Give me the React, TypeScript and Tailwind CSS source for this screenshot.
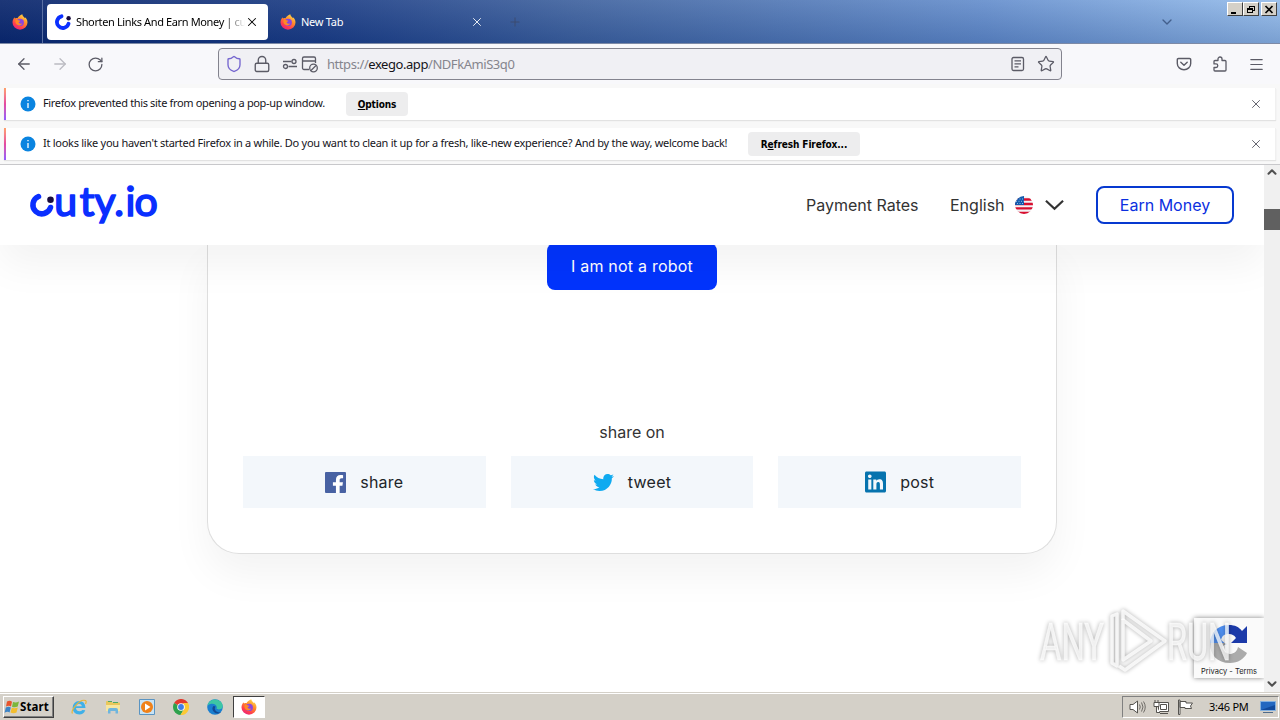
import type { ReactNode } from 'react';
import {
  ArrowLeft,
  ArrowRight,
  ChevronDown,
  ChevronUp,
  Lock,
  Menu,
  Plus,
  RotateCw,
  Shield,
  Star,
  X,
} from 'lucide-react';
import { FaFacebookF, FaLinkedin, FaTwitter } from 'react-icons/fa';

function FirefoxIcon({ className }: { className?: string }) {
  return (
    <svg viewBox="0 0 16 16" className={className}>
      <defs>
        <linearGradient id="fox" x1="0.8" y1="0" x2="0.2" y2="1">
          <stop offset="0" stopColor="#ffe14d" />
          <stop offset="0.4" stopColor="#ff8a2a" />
          <stop offset="0.75" stopColor="#ff3b4f" />
          <stop offset="1" stopColor="#e0208c" />
        </linearGradient>
      </defs>
      <path
        d="M10.3.3c.2 1.6 1 2.2 2.1 3.2.3.3.5.5.6.8.2-.2.2-.6.1-1 1.4 1 2.4 3 2.4 5.1a7.5 7.3 0 0 1-15 0c0-2.3 1-4 2.1-5.2 0 .7.2 1 .5 1.300.9-.5 1.600-.5 2.400-.3C6.200 2.900 8.100.8 10.300.3z"
        fill="url(#fox)"
      />
      <circle cx="8.2" cy="8.4" r="3.7" fill="#8a45e0" />
      <path d="M3.500 6.200c1.500-1 2.700-.4 3.400.2 1 .1 1.500.2 1.400.6-.5.700-1.600.6-1.700 1.300.2 1.500 2.300 1.800 3.600.9-.4 1.700-2.300 2.600-4 2-2.200-.8-3.200-2.800-2.700-5z" fill="#ff8b24" />
    </svg>
  );
}

function CutyMark({ className }: { className?: string }) {
  return (
    <svg viewBox="0 0 16 16" className={className}>
      <path d="M6.500 2.300A5.900 5.900 0 1 0 13.500 9.800" fill="none" stroke="#0a2fff" strokeWidth="3.8" strokeLinecap="round" />
      <circle cx="13.6" cy="4.2" r="2.2" fill="#190c3c" />
    </svg>
  );
}

function CaptionButton({ children }: { children: ReactNode }) {
  return (
    <button className="flex h-3.5 w-4 items-center justify-center border border-t-white border-r-[#404040] border-b-[#404040] border-l-white bg-[#d4d0c8]">
      <svg viewBox="0 0 10 9" className="h-[9px] w-2.5" fill="none" stroke="#000" shapeRendering="crispEdges">
        {children}
      </svg>
    </button>
  );
}

function TabStrip() {
  return (
    <div className="flex h-11 border-b border-[#7d8aa6] bg-[linear-gradient(to_bottom,#ffffff14,#00206030),linear-gradient(to_right,#0a266c,#1c3d85_25%,#40639f_45%,#668fcd_77%,#96bdeb)]">
      <div className="flex w-[43px] items-center justify-center border-r border-[#5a70a3]">
        <FirefoxIcon className="mr-0.5 size-4" />
      </div>
      <div className="mt-1 ml-1 flex h-9 w-[221px] items-center rounded bg-white pl-2">
        <CutyMark className="size-4" />
        <span className="mt-px ml-[5px] w-[169px] bg-[linear-gradient(to_right,#000_88%,#fff)] bg-clip-text text-[11px] tracking-[-0.37px] whitespace-nowrap text-transparent">
          Shorten Links And Earn Money | cu
        </span>
        <X className="size-3.5" strokeWidth={1.8} />
      </div>
      <div className="flex h-full w-[233px] items-center pl-3">
        <FirefoxIcon className="size-4" />
        <span className="mt-0.5 ml-[5px] flex-1 text-[11px] tracking-[-0.25px] text-white">New Tab</span>
        <X className="mr-[17px] size-3.5 text-white" strokeWidth={1.5} />
      </div>
      <div className="flex flex-1 items-center">
        <Plus className="ml-[7px] size-3.5 text-[#3b4a6b]" strokeWidth={1.5} />
        <ChevronDown className="mr-[52px] ml-auto size-4 text-[#435f8c]" strokeWidth={2} />
      </div>
      <div className="flex w-[53px] pt-0.5">
        <CaptionButton>
          <path d="M1 7.500h5" strokeWidth="2" />
        </CaptionButton>
        <CaptionButton>
          <path d="M3.500 3V1.500h5v4H7M3 1.500h6M1.500 3.500h5v4h-5zM1 4.500h6" />
        </CaptionButton>
        <div className="w-0.5" />
        <CaptionButton>
          <path d="M1.500 1l7 7M8.500 1l-7 7" strokeWidth="1.7" shapeRendering="auto" />
        </CaptionButton>
      </div>
    </div>
  );
}

function Toolbar() {
  return (
    <div className="flex h-10 items-center bg-[#f8f8fb] text-[#5b5b66]">
      <ArrowLeft className="ml-[15px] size-[18px]" strokeWidth={1.7} />
      <ArrowRight className="ml-[18px] size-[18px] text-[#bbbbc2]" strokeWidth={1.7} />
      <RotateCw className="ml-[18px] size-[17px]" strokeWidth={1.8} />
      <div className="ml-[114px] flex h-8 w-[844px] items-center rounded border border-[#83838e] bg-[#f0f0f4]">
        <Shield className="ml-[6px] size-[18px] text-[#7566cf]" strokeWidth={1.8} />
        <Lock className="ml-2.5 size-[18px]" strokeWidth={1.8} />
        <svg viewBox="0 0 16 16" className="ml-[11px] size-4" fill="none" stroke="currentColor" strokeWidth="1.3">
          <path d="M1 5.500h8.500M6.500 10.500H15" />
          <circle cx="12" cy="5.5" r="2" />
          <circle cx="3.5" cy="10.5" r="2" />
        </svg>
        <svg viewBox="0 0 18 18" className="ml-[3px] size-[18px]" fill="none" stroke="currentColor" strokeWidth="1.3">
          <path d="M8 14.500H3a1.500 1.500 0 0 1-1.500-1.500V3.500A1.500 1.500 0 0 1 3 2h10a1.500 1.500 0 0 1 1.500 1.500V8M1.500 6h13" />
          <circle cx="12.5" cy="13" r="3.8" />
          <path d="M10 15.500l5-5" />
        </svg>
        <span className="mt-0.5 ml-2 text-[13px] tracking-[-0.44px] whitespace-nowrap text-[#85858d]">
          https://<span className="text-[#15141a]">exego.app</span>/NDFkAmiS3q0
        </span>
        <svg viewBox="0 0 16 16" className="ml-auto size-4" fill="none" stroke="currentColor" strokeWidth="1.3">
          <rect x="2" y="1.5" width="11.5" height="13" rx="1.5" />
          <path d="M4.500 4.800h6.500M4.500 7.800h6.500M4.500 10.800h4" />
        </svg>
        <Star className="mr-[6px] ml-[11px] size-[18px]" strokeWidth={1.7} />
      </div>
      <svg viewBox="0 0 16 16" className="ml-[114px] size-4" fill="none" stroke="currentColor" strokeWidth="1.4" strokeLinecap="round" strokeLinejoin="round">
        <path d="M2.500 2.500h11a1.200 1.200 0 0 1 1.200 1.200V7.500a6.700 6.200 0 0 1-13.400 0V3.700a1.200 1.200 0 0 1 1.200-1.200zM4.800 6.300L8 9.300l3.200-3" />
      </svg>
      <svg viewBox="0 0 16 16" className="ml-5 size-4" fill="none" stroke="currentColor" strokeWidth="1.3" strokeLinejoin="round">
        <path d="M2 5.500a1 1 0 0 1 1-1h3V3a2 2 0 0 1 4 0v1.500h3a1 1 0 0 1 1 1V14a1 1 0 0 1-1 1H3a1 1 0 0 1-1-1v-2.500h2a1.800 1.800 0 0 0 0-3.600H2z" />
      </svg>
      <Menu className="ml-[20px] size-[17px]" strokeWidth={1.7} />
    </div>
  );
}

function Notice({ text, action, textClass }: { text: string; action: ReactNode; textClass: string }) {
  return (
    <div className="mx-1 mt-1 mb-1 flex h-8 items-center border-r border-[#f0f0f0] bg-white shadow-[0_1px_1px_#e2e2e2]">
      <div className="h-full w-0.5 bg-linear-to-b from-[#ffa06a] via-[#e5489f] to-[#9059ff]" />
      <svg viewBox="0 0 16 16" className="ml-3.5 size-4">
        <circle cx="8" cy="8" r="7.5" fill="#0a84e0" />
        <path d="M8 7v5M8 4v1.300" stroke="#fff" strokeWidth="1.3" />
      </svg>
      <span className={`-mt-0.5 ml-[7px] text-[11px] whitespace-nowrap text-[#15141a] ${textClass}`}>{text}</span>
      {action}
      <X className="mr-3 ml-auto size-3.5 text-[#5b5b66]" strokeWidth={1.6} />
    </div>
  );
}

function CutyLogo() {
  return (
    <svg viewBox="0 0 134 44" className="h-11 w-[134px] overflow-visible" aria-label="cuty.io">
      <path d="M10.500 13.500A9 9 0 1 0 22.500 24.500" fill="none" stroke="#0a2fff" strokeWidth="5.5" strokeLinecap="round" />
      <circle cx="22.5" cy="16.800" r="3.3" fill="#190c3c" />
      <text
        x="26.3 51.700 66.500 86.300 97.500 106.500"
        y="32.500"
        className="font-['Lato'] text-[41px]"
        fill="#0a2fff"
        stroke="#0a2fff"
        strokeWidth="1.7"
        strokeLinejoin="round"
      >
        uty.io
      </text>
    </svg>
  );
}

function UsFlag() {
  return (
    <svg viewBox="0 0 18 18" className="size-[18px]">
      <clipPath id="round">
        <circle cx="9" cy="9" r="9" />
      </clipPath>
      <g clipPath="url(#round)">
        <path fill="#f3f3f5" d="M0 0h18v18H0z" />
        <path stroke="#d80f30" strokeWidth="2.3" d="M0 3.500h18M0 8h18M0 12.300h18M0 16.800h18" />
        <path fill="#1059ae" d="M0 0h9v9H0z" />
        <path stroke="#d5e4f3" strokeWidth=".7" strokeDasharray="1 1.500" d="M2 3h7M1 5.300h8M2 7.500h7" />
      </g>
    </svg>
  );
}

function SiteHeader() {
  return (
    <header className="relative z-10 flex h-20 shrink-0 items-center bg-white pr-[30px] pl-7 text-base text-[#333] shadow-[0_20px_40px_rgba(0,0,0,0.05)]">
      <CutyLogo />
      <span className="ml-auto w-28 whitespace-nowrap">Payment Rates</span>
      <span className="ml-8 w-[54px] whitespace-nowrap">English</span>
      <div className="ml-[11px]">
        <UsFlag />
      </div>
      <svg viewBox="0 0 20 12" className="mr-8 ml-3 h-3 w-[19px]" fill="none" stroke="#333" strokeWidth="2.3">
        <path d="M1 1.500l9 8.500 9-8.500" />
      </svg>
      <button className="h-[38px] w-[138px] rounded-lg border-2 border-[#0739d0] text-[#0b2fdf]">
        Earn Money
      </button>
    </header>
  );
}

function ShareButton({ icon, label }: { icon: ReactNode; label: string }) {
  return (
    <button className="flex h-[52px] items-center justify-center gap-3.5 bg-[#f3f7fb] text-base tracking-[0.25px] text-[#212529]">
      {icon}
      {label}
    </button>
  );
}

function ShareCard() {
  return (
    <section className="mx-auto flex h-[309px] w-[850px] shrink-0 flex-col items-center rounded-b-[32px] border border-t-0 border-[#dedede] bg-white px-[35px] shadow-[0_20px_40px_rgba(0,0,0,0.05)]">
      <button className="-mt-0.5 h-[47px] w-[170px] shrink-0 rounded-lg bg-[#0234fd] pb-0.5 text-base tracking-[0.22px] text-white">
        I am not a robot
      </button>
      <p className="mt-[130px] mb-3 text-base leading-6 text-[#333]">share on</p>
      <div className="grid w-full grid-cols-3 gap-[25px]">
        <ShareButton
          label="share"
          icon={
            <span className="flex size-[21px] items-end justify-end overflow-hidden rounded-[1px] bg-[#4862a3]">
              <FaFacebookF className="mr-0.5 -mb-px h-[19px] w-3 text-white" />
            </span>
          }
        />
        <ShareButton label="tweet" icon={<FaTwitter className="size-[21px] text-[#0faaf0]" />} />
        <ShareButton label="post" icon={<FaLinkedin className="h-6 w-[21px] text-[#0673ae]" />} />
      </div>
    </section>
  );
}

function Recaptcha() {
  return (
    <div className="absolute right-0 bottom-[14px] flex h-[60px] w-[70px] flex-col items-center bg-[#fafafa] pt-1.5 shadow-[0_0_5px_#808080]">
      <svg viewBox="0 0 40 40" className="size-10">
        <path d="M20 1c6 0 10 2 13 6l5-5v17H22l5-5c-2-3-4-4-7-4z" fill="#1c3aa9" />
        <path d="M20 1v9c-5 0-7 2-8 6l6 5H1C1 9 8 1 20 1z" fill="#4f8ff0" />
        <path d="M1 19l5 0 12 0-5 4c2 5 5 7 9 7 4-1 6-3 7-7l9 6c-3 6-9 10-17 10C8 39 1 31 1 19z" fill="#ababab" />
      </svg>
      <span className="mt-0.5 text-[7.5px] leading-3 whitespace-nowrap text-[#222]">Privacy - Terms</span>
    </div>
  );
}

function Watermark() {
  return (
    <svg viewBox="0 0 210 76" className="absolute right-[21px] bottom-[12px] h-[76px] w-[210px] overflow-visible drop-shadow-[0_0_2px_#00000066]">
      <g fill="#ffffff" fillOpacity="0.75" stroke="#fff" strokeOpacity="0.5" className="font-['Roboto'] text-[51px]">
        <text x="7" y="56" textLength="64" lengthAdjust="spacingAndGlyphs">
          ANY
        </text>
        <text x="134" y="56" textLength="64" lengthAdjust="spacingAndGlyphs">
          RUN
        </text>
      </g>
      <g fill="none" stroke="#fff" strokeOpacity="0.8" strokeWidth="3.5" strokeLinejoin="round">
        <path d="M79 12l5-2v52l-5-3zM90 16V7l42 30-40 29-6-4" />
        <path d="M90 16v40l28-19z" />
      </g>
    </svg>
  );
}

function Scrollbar() {
  return (
    <div className="flex w-4 shrink-0 flex-col items-center bg-[#f0f0f0] text-[#505050]">
      <ChevronUp className="size-3.5" strokeWidth={3.5} />
      <div className="mt-[30px] h-[21px] w-full bg-[#606060]" />
      <ChevronDown className="mt-auto mb-px size-3.5" strokeWidth={3.5} />
    </div>
  );
}

function Taskbar() {
  return (
    <div className="flex h-[27px] items-center border-t border-white bg-[#d4d0c8] pl-[3px] text-[11px]">
      <button className="flex h-[22px] w-[51px] items-center border border-t-white border-r-[#404040] border-b-[#404040] border-l-white text-[11.5px] font-bold shadow-[inset_-1px_-1px_#808080]">
        <svg viewBox="0 0 16 16" className="size-4 shrink-0">
          <path d="M3 2.500q3-1.500 5 .2L7 7.500q-2-1.300-5 0z" fill="#e8542c" />
          <path d="M9 3q3 1 6-.5l-1.300 5Q11 9 8 7.800z" fill="#7cb63b" />
          <path d="M1.800 8.500q3-1.500 5 0l-1.200 5q-2-1.500-5 .2z" fill="#3d84c6" />
          <path d="M7.800 8.800q3 1 6-.3l-1.300 5q-3 1.300-6 0z" fill="#f3bd2e" />
        </svg>
        <span className="tracking-[0.1px]">Start</span>
      </button>
      <div className="ml-[17px] flex items-center gap-[18px]">
        <svg viewBox="0 0 16 16" className="size-4">
          <path d="M14.500 9H5q.4 3.200 3.500 3.200 2 0 2.800-1.300l3 .3Q12.500 15.500 8.400 15.500 2 15 1.600 8.700 2 2.500 8.200 2q6 .2 6.300 7zM5 7.200h6q-.4-2.500-2.900-2.500T5 7.200z" fill="#3fb0e8" />
          <path d="M1.500 14.500C-.5 12 8-.5 14.500 1.500q1.300.8 0 3.500" fill="none" stroke="#e7b53a" strokeWidth="1.2" />
        </svg>
        <svg viewBox="0 0 16 16" className="size-4">
          <path d="M1 3q0-1 1-1h4l1 1.500h7q1 0 1 1V12H1z" fill="#e9c75b" />
          <path d="M3 2.500h4M8 3.500h5" stroke="#4fa866" />
          <path d="M1 6h14v6H1z" fill="#f7e6a0" />
          <path d="M3 14.500V11q0-2 2-2h6q2 0 2 2v3.500h-2.500V12h-5v2.500z" fill="#6fb5de" />
        </svg>
        <svg viewBox="0 0 16 16" className="size-4">
          <path d="M.5.500h15v15H.5z" fill="#c8e3f5" stroke="#5a94c2" />
          <circle cx="8" cy="8" r="6" fill="#f08119" />
          <path d="M6 4.500l5.500 3.500L6 11.500z" fill="#fff" />
        </svg>
        <svg viewBox="0 0 16 16" className="size-4">
          <path d="M8 8L1.100 4A8 8 0 0 1 15 4z" fill="#e23a2e" />
          <path d="M8 8L1.100 4A8 8 0 0 0 7.500 16L11 10z" fill="#2da14c" />
          <path d="M15 4A8 8 0 0 1 7.500 16L11.500 9.500 10 4z" fill="#fcc934" />
          <circle cx="8" cy="8" r="3.8" fill="#fff" />
          <circle cx="8" cy="8" r="2.9" fill="#3f7ee8" />
        </svg>
        <svg viewBox="0 0 16 16" className="size-4">
          <circle cx="8" cy="8" r="7.8" fill="#1a7fd0" />
          <path d="M.7 6C2 .5 9-1.500 13.500 2.500c2.800 2.500 2.800 6.500.5 7.500-2 .9-5 .3-4.300-.8C10.500 6.500 7 4 3.500 5 2 5.300 1 6 .7 7z" fill="#3dc7a5" />
          <path d="M6.500 7C4 9.500 6 14 10.500 14.500q2 .1 3.500-1.200C9 14 6.500 10 8.500 7.500z" fill="#124a94" />
        </svg>
      </div>
      <div className="ml-[10px] flex h-[22px] w-8 items-center justify-center border border-t-[#404040] border-r-white border-b-white border-l-[#404040] bg-white">
        <FirefoxIcon className="size-4" />
      </div>
      <div className="mr-px ml-auto flex h-[22px] w-[157px] items-center border border-t-[#808080] border-r-white border-b-white border-l-[#808080] pl-1.5">
        <svg viewBox="0 0 17 16" className="h-4 w-[17px]" fill="none" stroke="#55534f">
          <path d="M1 5.500h3L8.500 2v12L4 10.500H1z" fill="#fff" />
          <path d="M10.500 5.500q1.500 2.500 0 5M12.500 3.500q3 4.500 0 9M14.500 2.500q3.500 5.500 0 11" strokeWidth=".8" />
        </svg>
        <svg viewBox="0 0 16 16" className="ml-[7px] size-4" fill="#fff" stroke="#55534f">
          <path d="M5.500 3.500h10v9h-10zM7.500 5.500h6v5h-6zM7 14.500h8" />
          <path d="M1 3.500h5v4H1zM2 1v2.500M5 1v2.500M3.500 7.500v6H7" />
        </svg>
        <svg viewBox="0 0 17 16" className="ml-2 h-4 w-[17px]" fill="#fff" stroke="#55534f">
          <path d="M1.500 1v14.500h1.500V1zM3 2.500h6v1.500h6.500L13.500 7l1 2.500H8V8.500H3z" />
        </svg>
        <span className="ml-[15px] w-[39px] tracking-[-0.25px] whitespace-nowrap">3:46 PM</span>
        <svg viewBox="0 0 16 14" className="ml-3 h-3.5 w-4">
          <path d="M.5 1.500h15v9H.5z" fill="#2468c0" stroke="#83b0df" />
          <path d="M1 10l14-5v5z" fill="#124a9c" />
          <path d="M3 12.500h10" stroke="#4f6b8a" />
        </svg>
      </div>
    </div>
  );
}

export default function App() {
  return (
    <div className="flex h-[720px] w-[1280px] flex-col overflow-hidden bg-white font-['Noto_Sans',sans-serif]">
      <TabStrip />
      <Toolbar />
      <div className="flex h-[81px] flex-col border-b border-[#c8c8cb] bg-[#f8f8f8]">
        <Notice
          text="Firefox prevented this site from opening a pop-up window."
          textClass="w-[282px] tracking-[-0.35px]"
          action={
            <button className="ml-[21px] h-6 w-[62px] rounded bg-[#ededee] font-['DejaVu_Sans'] text-[10px] font-bold tracking-[-0.15px] whitespace-nowrap font-stretch-condensed">
              <u>O</u>ptions
            </button>
          }
        />
        <Notice
          text="It looks like you haven't started Firefox in a while. Do you want to clean it up for a fresh, like-new experience? And by the way, welcome back!"
          textClass="w-[684px] tracking-[-0.27px]"
          action={
            <button className="ml-[21px] h-6 w-28 rounded bg-[#ededee] font-['DejaVu_Sans'] text-[10px] font-bold tracking-[-0.1px] whitespace-nowrap font-stretch-condensed">
              R<u>e</u>fresh Firefox...
            </button>
          }
        />
      </div>
      <div className="flex h-[528px] border-b border-[#d4d0c8]">
        <main className="relative flex flex-1 flex-col overflow-hidden font-['Inter',sans-serif]">
          <SiteHeader />
          <ShareCard />
          <Recaptcha />
          <Watermark />
        </main>
        <Scrollbar />
      </div>
      <Taskbar />
    </div>
  );
}
